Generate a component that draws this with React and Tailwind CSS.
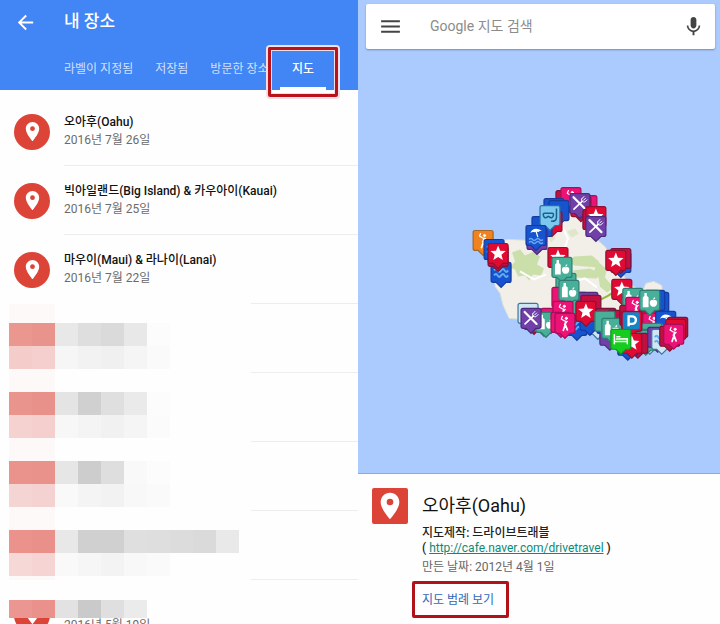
import { MdArrowBack, MdMenu, MdMic, MdPlace } from 'react-icons/md'

const tabs = ['라벨이 지정됨', '저장됨', '방문한 장소']

const maps = [
  { title: '오아후(Oahu)', date: '2016년 7월 26일' },
  { title: '빅아일랜드(Big Island) & 카우아이(Kauai)', date: '2016년 7월 25일' },
  { title: '마우이(Maui) & 라나이(Lanai)', date: '2016년 7월 22일' },
]

// Mosaic cells of the hidden entries, two lines per entry
const hidden = [
  [
    ['bg-[#ea9790]', 'bg-[#e9938d]', 'bg-[#e8e8e8]', 'bg-[#dedede]', 'bg-[#dadada]', 'bg-[#e8e8e8]', 'bg-[#fcfcfc]'],
    ['bg-[#f4cdcb]', 'bg-[#f4cfce]', 'bg-[#f6f6f6]', 'bg-[#f2f2f2]', 'bg-[#f0f0f0]', 'bg-[#f5f5f5]', 'bg-[#fafafa]'],
  ],
  [
    ['bg-[#e9948d]', 'bg-[#e8908a]', 'bg-[#e4e4e4]', 'bg-[#d0d0d0]', 'bg-[#dfdfdf]', 'bg-[#eaeaea]', 'bg-[#fcfcfc]'],
    ['bg-[#f5d2d0]', 'bg-[#f4cfce]', 'bg-[#f7f7f7]', 'bg-[#f4f4f4]', 'bg-[#f1f1f1]', 'bg-[#f5f5f5]', 'bg-[#fbfbfb]'],
  ],
  [
    ['bg-[#ea938d]', 'bg-[#e9918b]', 'bg-[#e6e6e6]', 'bg-[#cdcdcd]', 'bg-[#dedede]', 'bg-[#f9f9f9]', 'bg-[#fcfcfc]'],
    ['bg-[#f5d4d4]', 'bg-[#f4d2d1]', 'bg-[#f9f9f9]', 'bg-[#f4f4f4]', 'bg-[#f2f2f2]', 'bg-[#f8f8f8]', 'bg-[#fafafa]'],
  ],
  [
    ['bg-[#eb928c]', 'bg-[#ea908b]', 'bg-[#e8e8e8]', 'bg-[#d0d0d0]', 'bg-[#d0d0d0]', 'bg-[#dfdfdf]', 'bg-[#dedede]', 'bg-[#dcdcdc]', 'bg-[#dadada]', 'bg-[#e9e9e9]'],
    ['bg-[#f6d8d7]', 'bg-[#f5d4d3]', 'bg-[#f9f9f9]', 'bg-[#f6f6f6]', 'bg-[#f3f3f3]', 'bg-[#f8f8f8]', 'bg-[#fafafa]'],
  ],
]

const lastLine = ['bg-[#eb9690]', 'bg-[#ea918b]', 'bg-[#e2e2e2]', 'bg-[#cacaca]', 'bg-[#dfdfdf]', 'bg-[#ebebeb]']

const colors = {
  red: ['#e00a33', '#8c1230'],
  crimson: ['#c01040', '#7d1238'],
  pink: ['#ec1276', '#a80d58'],
  purple: ['#7040a8', '#4c2a7a'],
  blue: ['#1654cf', '#143a9c'],
  teal: ['#48af98', '#2f7d72'],
  sky: ['#7cc8ef', '#2b6f9e'],
  pale: ['#cfe6f4', '#39779c'],
  orange: ['#f08220', '#a3672c'],
  green: ['#14cd1c', '#13942a'],
}

// Drawn in order, so the later pins lie on top
const pins = [
  [556, 191, 'crimson'], [561, 188, 'pink', 'golf'], [577, 196, 'pink'], [544, 199, 'blue'], [549, 201, 'blue'],
  [571, 197, 'red'], [570, 194, 'purple', 'fork'], [583, 210, 'crimson'], [586, 207, 'red', 'star'], [586, 217, 'purple', 'fork'],
  [542, 212, 'red'], [532, 217, 'blue'], [540, 206, 'sky', 'snorkel'], [527, 230, 'purple'], [526, 226, 'blue', 'beach'],
  [473, 231, 'orange', 'golf'], [491, 263, 'blue', 'wave'], [484, 240, 'blue', 'wave'], [488, 247, 'crimson'], [488, 244, 'red', 'star'],
  [548, 248, 'red', 'star'], [556, 274, 'teal', 'shop'], [552, 258, 'teal', 'shop'],
  [552, 288, 'pink'], [567, 293, 'teal'], [578, 293, 'purple'], [581, 296, 'crimson'], [559, 281, 'teal', 'shop'],
  [518, 304, 'pale'], [524, 310, 'crimson'], [534, 312, 'teal', 'shop'], [541, 309, 'pink'], [536, 313, 'teal', 'shop'], [521, 309, 'purple', 'fork'],
  [567, 316, 'blue', 'wave'], [553, 302, 'pink', 'golf'], [551, 313, 'pink'], [555, 314, 'pink', 'golf'],
  [583, 309, 'pale', 'snorkel'], [588, 315, 'pale', 'wave'], [580, 311, 'blue'], [576, 302, 'red', 'star'],
  [596, 309, 'crimson'], [597, 314, 'blue', 'wave'], [608, 311, 'crimson'], [610, 321, 'crimson'], [600, 326, 'purple'],
  [611, 253, 'blue'], [611, 249, 'crimson'], [606, 251, 'red', 'star'], [612, 280, 'red', 'star'],
  [595, 312, 'teal'], [602, 319, 'teal', 'shop'],
  [623, 289, 'teal', 'shop'], [620, 306, 'crimson'], [626, 298, 'pink', 'golf'], [649, 293, 'blue'], [645, 291, 'blue'],
  [640, 308, 'crimson'], [643, 314, 'pink', 'golf'], [640, 291, 'teal', 'shop'], [656, 312, 'blue', 'beach'],
  [642, 324, 'teal'], [640, 330, 'pale', 'snorkel'], [636, 331, 'teal'], [628, 334, 'crimson'], [618, 336, 'blue'],
  [648, 328, 'purple'], [652, 330, 'pale', 'wave'], [622, 312, 'red', 'parking'], [622, 334, 'red', 'star'], [611, 330, 'green', 'bed'],
  [668, 318, 'crimson'], [666, 320, 'red'], [660, 327, 'crimson'], [664, 325, 'pink', 'golf'],
]

function Glyph({ kind }) {
  const line = { fill: 'none', stroke: '#fff', strokeWidth: 1.6, strokeLinecap: 'round' }
  switch (kind) {
    case 'star':
      return <path d="M10 2l2.1 5.2 5.6.4-4.3 3.6 1.4 5.4-4.8-3-4.8 3 1.4-5.4-4.3-3.6 5.6-.4z" fill="#fff" />
    case 'fork':
      return (
        <g {...line}>
          <path d="M3.6 3.6l12 12" strokeWidth="2.2" />
          <path d="M4 15.6l8.2-7.8" />
          <path d="M11.7 5.4c-.4 2 .6 3.4 3.2 3L17 6.3M12 5.2L14 3M13.6 6.7l2-2" strokeWidth="1" />
        </g>
      )
    case 'shop':
      return (
        <g fill="#fff">
          <path d="M4.6 2.5H7v3l1.8 1.7V17H3V7.2l1.6-1.7z" />
          <path d="M13.7 10c2-1.2 3.9.2 3.7 2.6-.3 2.4-2 4.4-3.7 3.7-1.7.7-3.4-1.3-3.7-3.7-.2-2.4 1.7-3.8 3.7-2.6z" />
          <path d="M13.4 9.3c0-1.5.8-2.3 2-2.5 0 1.4-.7 2.3-2 2.5z" />
        </g>
      )
    case 'golf':
      return (
        <g {...line}>
          <circle cx="11.4" cy="5" r="1.1" fill="#fff" strokeWidth="1" />
          <path d="M7.4 3l-1 2.6 3.2 2M12.4 8l-3 3" strokeWidth="1.2" />
          <path d="M10.8 8l-.6 3.8L8.4 17M10.4 11.6l2 5" strokeWidth="1.8" />
        </g>
      )
    case 'beach':
      return (
        <g>
          <path d="M4.4 7.5C5.6 3 11 1.5 15.8 5.5c-2-.2-2.7.2-3.6 1.1-1.5-.7-2.7-.6-3.8.2-1.3-.5-2.5-.3-4 .7z" fill="#fff" />
          <path d="M10.2 6.2l1.5 5" {...line} strokeWidth="1.2" />
          <path d="M3 14q2-2 3.5 0t3.5 0 3.5 0 3.5 0M3 17q2-2 3.5 0t3.5 0 3.5 0 3.5 0" fill="none" stroke="#67a3ef" strokeWidth="1.5" />
        </g>
      )
    case 'wave':
      return <path d="M3 8q2-3 3.5 0t3.5 0 3.5 0 3.5 0M3 13q2-3 3.5 0t3.5 0 3.5 0 3.5 0" fill="none" stroke="#65acf1" strokeWidth="2" />
    case 'snorkel':
      return (
        <g fill="none" stroke="#14628d" strokeWidth="1.5">
          <path d="M4.5 7.6h7.8c1.6 0 1.8 3.6-.6 4.6-1.6.6-2.6-1.4-3.3-1.4s-1.7 2-3.3 1.4c-2.4-1-2.2-4.6-.6-4.6z" />
          <path d="M16.5 3v9c0 3.3-2.8 4-5.5 3.6" />
        </g>
      )
    case 'bed':
      return <path d="M3.5 5.5v9M3.5 12.3h13v2.2M5.5 9.8l11-.4v3M6 7.5h3" {...line} strokeWidth="1.5" />
    case 'parking':
      return (
        <g>
          <rect x="1" y="1" width="17" height="17" rx="2" fill="#1584c7" />
          <path d="M6.8 15V5h3.5a3.4 3.4 0 010 7.6H7" fill="none" stroke="#fff" strokeWidth="2.4" />
        </g>
      )
    default:
      return null
  }
}

function Pin({ x, y, color, kind }) {
  const [fill, stroke] = colors[color]
  return (
    <g transform={`translate(${x} ${y})`}>
      <path d="M2 0h16q2 0 2 2v16q0 2-2 2h-3l-5 5-5-5H2q-2 0-2-2V2q0-2 2-2z" fill={fill} stroke={stroke} strokeWidth="1.2" />
      <Glyph kind={kind} />
    </g>
  )
}

function IslandMap() {
  return (
    <svg viewBox="358 0 362 474" className="absolute inset-0 w-full h-full" role="img" aria-label="오아후">
      <path
        d="M494 242l14-2 24 1 18-13 8-14 22-6 13 12 4 20 9 8 5 14 9 6 8 16 15 8 3-8 8-2 8 4 1 7-6 4 4 12 14 16-6 14-28 2-32-2-28-12-30-4-42-4-6-13-3-12-5-7-1-16-3-10-8-7z"
        fill="#f1efe8"
        stroke="#dcded8"
        strokeWidth="1"
      />
      <g fill="#cbdfaa">
        <path d="M512 253l8-3 5 6 9-4 6 5-3 8 7 4-3 7-8-1-4 6-4-5-7 1-3-7-5-2 5-6z" />
        <path d="M574 257l18-1 7 6-1 6-24-2-5-4z" />
        <path d="M573 271l17-2 9 4-2 6-20-1z" />
        <path d="M598 262l9 8-2 8 9 10-7 5-7-6-1-8-5-7z" />
        <path d="M567 232l8-3 4 5-7 4zM548 237l5-4 2 6-4 4z" opacity=".5" />
      </g>
      <path d="M560 222l8 17-3 9M520 272l14 8 12-5M573 283l12-4 12 9" fill="none" stroke="#fff" strokeWidth="2" />
      <path d="M590 303q12-2 22-9" fill="none" stroke="#94b83f" strokeWidth="2" />
      {pins.map(([x, y, color, kind], i) => (
        <Pin key={i} x={x} y={y} color={color} kind={kind} />
      ))}
    </svg>
  )
}

function PinBadge() {
  return (
    <span className="w-9 h-9 rounded-full bg-[#db4437] text-white flex items-center justify-center flex-shrink-0">
      <MdPlace size={23} />
    </span>
  )
}

function Mosaic({ cells }) {
  return (
    <div className="flex">
      {cells.map((c, i) => (
        <span key={i} className={`w-[23px] h-[23px] ${c}`} />
      ))}
    </div>
  )
}

function PlacesPanel() {
  return (
    <section className="min-w-0 bg-[#fefefe] overflow-hidden">
      <header className="bg-[#4285f4] text-white">
        <div className="flex items-center h-11 pl-[14px]">
          <button aria-label="뒤로" className="w-[50px]"><MdArrowBack size={23} /></button>
          <h1 className="text-[17px] font-medium">내 장소</h1>
        </div>
        <nav className="flex h-[46px] pl-16 text-[12px] text-[#cfe0ff] whitespace-nowrap">
          <div className="flex flex-1 min-w-0 gap-[22px] pt-1 overflow-hidden">
            {tabs.map((t) => (
              <button key={t} className="flex-shrink-0">{t}</button>
            ))}
          </div>
          <button className="relative w-[70px] mr-5 pt-1 font-medium text-white">
            지도
            <span className="absolute left-3 right-3 bottom-0 h-[3px] bg-white" />
            <span className="absolute inset-x-0 top-[3px] -bottom-[7px] rounded-xs border-3 border-[#b9121b] ring-2 ring-[#f6dfe4] inset-ring-1 inset-ring-[#f0dde6]" />
          </button>
        </nav>
      </header>

      <ul className="pt-[7px]">
        {maps.map((m) => (
          <li key={m.title} className="group flex items-center h-[69px] pl-[14px] gap-[14px]">
            <PinBadge />
            <div className="flex-1 h-full flex flex-col">
              <div className="flex-1 flex flex-col justify-center">
                <h2 className="text-[12px] leading-[18px] font-medium text-[#111]">{m.title}</h2>
                <p className="text-[12px] leading-[18px] text-[#6b6b6b]">{m.date}</p>
              </div>
              <div className="h-px bg-[#ededed] group-nth-3:w-[107px] group-nth-3:ml-auto" />
            </div>
          </li>
        ))}
        {hidden.map((lines, i) => (
          <li key={i} className="flex justify-between h-[69px] pl-[9px]">
            <div className="w-[232px]">
              <div className="w-[46px] h-[19px] bg-[#fef9f9]" />
              {lines.map((cells, j) => (
                <Mosaic key={j} cells={cells} />
              ))}
              <div className="w-[46px] h-1 bg-[#fef9f9]" />
            </div>
            <div className="w-[107px] border-b border-[#ededed]" />
          </li>
        ))}
        <li className="relative flex items-center h-[69px] pl-[14px] gap-[14px]">
          <PinBadge />
          <p className="pt-5 text-[12px] leading-[18px] text-[#6b6b6b]">2016년 5월 19일</p>
          <div className="absolute left-[9px] top-0 h-[38px] w-[232px] pt-5 bg-[#fefefe] overflow-hidden">
            <Mosaic cells={lastLine} />
          </div>
        </li>
      </ul>
    </section>
  )
}

function MapPanel() {
  return (
    <section className="min-w-0 flex flex-col bg-[#fefefe]">
      <div className="relative flex-1 bg-[#abcafd] border-b border-[#8ea9d6]">
        <IslandMap />
        <div className="relative flex items-center h-[45px] mt-1 ml-2 mr-[5px] pl-3 pr-[10px] bg-white rounded-xs shadow-[0_1px_2px_0_#6f8cbd] text-[#444]">
          <button aria-label="메뉴" className="w-[52px]"><MdMenu size={25} /></button>
          <input
            type="text"
            aria-label="Google 지도 검색"
            placeholder="Google 지도 검색"
            className="flex-1 min-w-0 text-[14px] outline-none placeholder:text-[#8c8c8c]"
          />
          <button aria-label="음성 검색"><MdMic size={23} /></button>
        </div>
      </div>

      <div className="flex gap-[14px] h-[150px] pl-[14px] pt-[14px]">
        <span className="w-9 h-9 rounded-xs bg-[#db4437] text-white flex items-center justify-center flex-shrink-0">
          <MdPlace size={32} />
        </span>
        <div className="text-[12px] text-[#222]">
          <h2 className="pt-1 text-[18px] leading-[28px] text-[#111]">오아후(Oahu)</h2>
          <p className="pt-[6px] leading-[15px] font-medium">
            지도제작: 드라이브트래블
            <br />
            ( <a href="http://cafe.naver.com/drivetravel" className="font-normal text-[#0b8a78] underline">http://cafe.naver.com/drivetravel</a> )
          </p>
          <p className="pt-1 leading-[15px] text-[#666]">만든 날짜: 2012년 4월 1일</p>
          <button className="mt-[6px] -ml-[10px] w-[97px] h-[37px] pt-px pr-[5px] border-3 border-[#b01217] rounded-xs text-[#3367b8]">
            지도 범례 보기
          </button>
        </div>
      </div>
    </section>
  )
}

export default function App() {
  return (
    <main className="h-screen grid grid-cols-[358fr_362fr] grid-rows-1 overflow-hidden font-[Roboto,'Noto_Sans_CJK_KR',sans-serif]">
      <PlacesPanel />
      <MapPanel />
    </main>
  )
}
